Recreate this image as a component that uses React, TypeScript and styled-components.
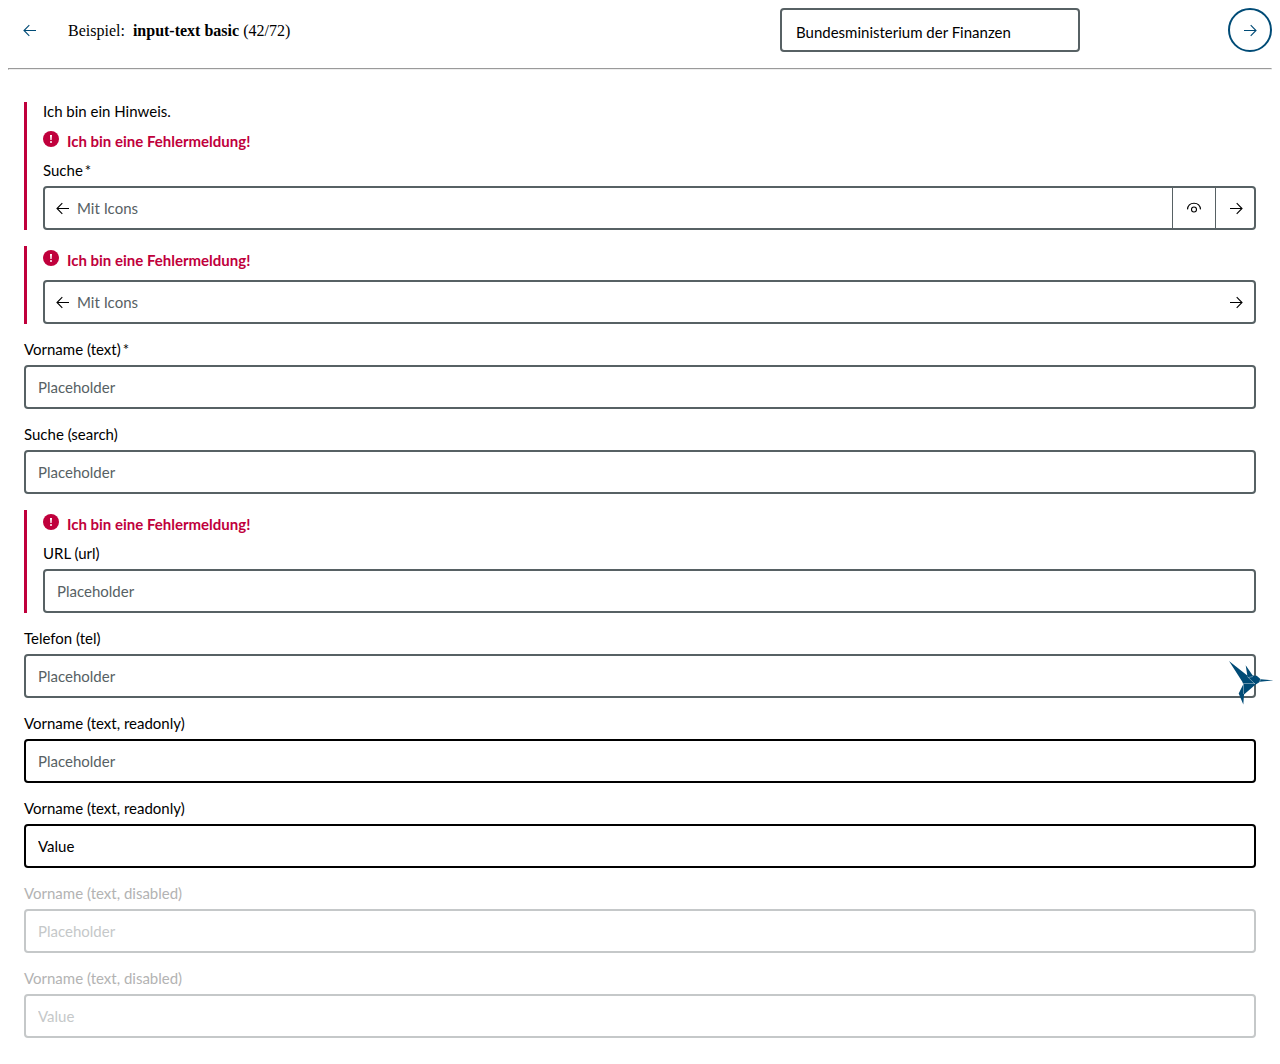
import React, { useId } from "react";
import styled, { createGlobalStyle } from "styled-components";

const color = {
  text: "#000000",
  border: "#576164",
  error: "#c0003c",
  primary: "#004b76",
  disabledBorder: "#c5c8c9",
  disabledText: "#b3b3b3",
};

const sans = `Lato, "Noto Sans", "Open Sans", sans-serif`;

const GlobalStyle = createGlobalStyle`
  *, *::before, *::after { box-sizing: border-box; }
  body {
    margin: 8px;
    background: #fff;
    color: ${color.text};
    font: 16px "Liberation Serif", "Times New Roman", serif;
  }
`;

const Header = styled.header`
  display: grid;
  grid-template-columns: 44px 1fr 300px 192px;
  align-items: center;
  height: 44px;
`;

const RoundButton = styled.button<{ $outlined?: boolean }>`
  display: flex;
  align-items: center;
  justify-content: center;
  justify-self: end;
  width: 44px;
  height: 44px;
  padding: 0;
  border: 2px solid ${(p) => (p.$outlined ? color.primary : "transparent")};
  border-radius: 50%;
  background: transparent;
  color: ${color.primary};
  cursor: pointer;
`;

const Title = styled.div`
  padding: 2px 0 0 16px;
  white-space: pre;
`;

const ThemeSelect = styled.select`
  appearance: none;
  width: 100%;
  height: 44px;
  padding: 4px 14px 0;
  border: 2px solid ${color.border};
  border-radius: 4px;
  background: #fff;
  color: ${color.text};
  font: 15px ${sans};
`;

const Divider = styled.hr`
  margin: 16px 0 32px;
`;

const Form = styled.form`
  display: flex;
  flex-direction: column;
  gap: 16px;
  padding: 0 16px 16px;
  font-family: ${sans};
  font-size: 15px;
  line-height: 19px;
`;

const Field = styled.div<{ $error?: boolean; $disabled?: boolean }>`
  display: flex;
  flex-direction: column;
  gap: 4px;
  padding-left: ${(p) => (p.$error ? "16px" : "0")};
  border-left: ${(p) => (p.$error ? `3px solid ${color.error}` : "none")};
  color: ${(p) => (p.$disabled ? color.disabledText : color.text)};
`;

const Hint = styled.div`
  padding-bottom: 2px;
`;

const ErrorMessage = styled.div`
  display: flex;
  align-items: flex-start;
  gap: 8px;
  height: 30px;
  color: ${color.error};
  font-weight: 700;
  line-height: 28px;

  svg {
    margin-top: 4px;
  }
`;

const Label = styled.label`
  display: flex;
  gap: 2px;
  padding-bottom: 2px;
`;

type BoxState = "normal" | "readonly" | "disabled";

const borderFor = { normal: color.border, readonly: color.text, disabled: color.disabledBorder };

const Box = styled.div<{ $state: BoxState }>`
  display: flex;
  align-items: stretch;
  height: 44px;
  border: 2px solid ${(p) => borderFor[p.$state]};
  border-radius: 4px;
  background: #fff;
`;

const IconSlot = styled.span<{ $side: "left" | "right" }>`
  display: flex;
  align-items: center;
  padding: ${(p) => (p.$side === "left" ? "0 6px 0 10px" : "0 10px 0 12px")};
`;

const IconButton = styled.button`
  display: flex;
  align-items: center;
  justify-content: center;
  width: 44px;
  padding: 0;
  border: 0;
  border-left: 1px solid ${color.border};
  border-right: 1px solid ${color.border};
  background: transparent;
  color: inherit;
  cursor: pointer;
`;

const TextInput = styled.input<{ $afterIcon?: boolean }>`
  flex: 1;
  min-width: 0;
  padding: 0 12px;
  padding-left: ${(p) => (p.$afterIcon ? "0" : "12px")};
  border: 0;
  outline: 0;
  background: transparent;
  color: ${color.text};
  font: inherit;

  &::placeholder {
    color: ${color.border};
    opacity: 1;
  }
  &:disabled,
  &:disabled::placeholder {
    color: ${color.disabledBorder};
  }
`;

const Bird = styled.svg`
  position: absolute;
  top: 660px;
  right: 6px;
  color: ${color.primary};
`;

const Arrow = ({ flip = false }: { flip?: boolean }) => (
  <svg width="16" height="16" viewBox="0 0 16 16" fill="none" stroke="currentColor" strokeWidth="1.1" aria-hidden="true">
    <path d={flip ? "M14 8.500H2.200M7.300 3.200 2 8.500l5.300 5.300" : "M2 8.500h11.800M8.700 3.200 14 8.500l-5.300 5.300"} />
  </svg>
);

const Eye = () => (
  <svg width="16" height="16" viewBox="0 0 16 16" fill="none" stroke="currentColor" strokeWidth="1.1" aria-hidden="true">
    <path d="M1.500 9.400C1.800 5.600 4.500 3.200 8 3.200s6.200 2.400 6.500 6.200" />
    <circle cx="8" cy="9.500" r="2.500" />
  </svg>
);

const Alert = () => (
  <svg width="16" height="16" viewBox="0 0 16 16" aria-hidden="true">
    <circle cx="8" cy="8" r="8" fill={color.error} />
    <path d="M7 4h2l-.4 5H7.400z" fill="#fff" />
    <circle cx="8" cy="11" r="1" fill="#fff" />
  </svg>
);

interface InputTextProps {
  label: string;
  hideLabel?: boolean;
  type?: string;
  required?: boolean;
  hint?: string;
  error?: string;
  placeholder?: string;
  value?: string;
  state?: BoxState;
  icons?: boolean;
  eye?: boolean;
}

function InputText({
  label, hideLabel, type = "text", required, hint, error, placeholder = "Placeholder", value, state = "normal", icons, eye,
}: InputTextProps) {
  const id = useId();
  return (
    <Field $error={!!error} $disabled={state === "disabled"}>
      {hint && <Hint>{hint}</Hint>}
      {error && (
        <ErrorMessage>
          <Alert />
          {error}
        </ErrorMessage>
      )}
      {!hideLabel && (
        <Label htmlFor={id}>
          {label}
          {required && <span>*</span>}
        </Label>
      )}
      <Box $state={state}>
        {icons && <IconSlot $side="left"><Arrow flip /></IconSlot>}
        <TextInput
          id={id}
          type={type}
          aria-label={hideLabel ? label : undefined}
          placeholder={placeholder}
          defaultValue={value}
          required={required}
          readOnly={state === "readonly"}
          disabled={state === "disabled"}
          $afterIcon={icons}
        />
        {eye && <IconButton type="button" aria-label="Anzeigen"><Eye /></IconButton>}
        {icons && <IconSlot $side="right"><Arrow /></IconSlot>}
      </Box>
    </Field>
  );
}

const message = "Ich bin eine Fehlermeldung!";

export default function App() {
  return (
    <>
      <GlobalStyle />
      <Header>
        <RoundButton type="button" aria-label="Zurück"><Arrow flip /></RoundButton>
        <Title>Beispiel:  <b>input-text basic</b> (42/72)</Title>
        <ThemeSelect aria-label="Theme" defaultValue="bmf">
          <option value="bmf">Bundesministerium der Finanzen</option>
        </ThemeSelect>
        <RoundButton type="button" aria-label="Weiter" $outlined><Arrow /></RoundButton>
      </Header>
      <Divider />
      <Form>
        <InputText label="Suche" type="search" required hint="Ich bin ein Hinweis." error={message} placeholder="Mit Icons" icons eye />
        <InputText label="Suche" hideLabel type="search" error={message} placeholder="Mit Icons" icons />
        <InputText label="Vorname (text)" required />
        <InputText label="Suche (search)" type="search" />
        <InputText label="URL (url)" type="url" error={message} />
        <InputText label="Telefon (tel)" type="tel" />
        <InputText label="Vorname (text, readonly)" state="readonly" />
        <InputText label="Vorname (text, readonly)" state="readonly" value="Value" />
        <InputText label="Vorname (text, disabled)" state="disabled" />
        <InputText label="Vorname (text, disabled)" state="disabled" value="Value" />
      </Form>
      <Bird width="46" height="46" viewBox="0 0 46 46" fill="currentColor" aria-hidden="true">
        <path d="M1 1 19.300 15.500 17.700 5.300 24.700 15.500 28.700 15.700 32.700 19.300 45.300 20.400 32 21.700 27 25 16 34.500 15.300 44.500 10.700 33.500 15.300 24.300 14.300 21.700z" />
        <path d="M19.300 16.500 27 24M14.500 23.500H27M15.500 24V34M25 16.500 20.500 17.500M32.700 19 31.500 22" fill="none" stroke="#c9dae5" strokeWidth=".5" />
      </Bird>
    </>
  );
}
